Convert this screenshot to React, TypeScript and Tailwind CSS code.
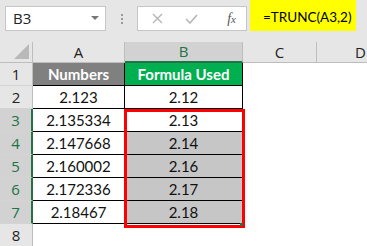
import React from "react";

const rows = [
  { n: "2.123", b: "2.12" },
  { n: "2.135334", b: "2.13" },
  { n: "2.147668", b: "2.14" },
  { n: "2.160002", b: "2.16" },
  { n: "2.172336", b: "2.17" },
  { n: "2.18467", b: "2.18" },
];

const cellFont = { fontFamily: "Lato, 'Open Sans', sans-serif" };
const uiFont = { fontFamily: "'Open Sans', 'Noto Sans', sans-serif" };

function RowHead({ n, sel }: { n: number; sel?: boolean }) {
  return (
    <div
      style={uiFont}
      className={
        "flex items-center justify-center border-b border-[#d4d4d4] text-[15px] " +
        (sel
          ? "bg-[#d2d2d2] text-[#217346] border-r-2 border-r-[#217346]"
          : "bg-[#e6e6e6] text-[#222] border-r border-r-[#bdbdbd]")
      }
    >
      {n}
    </div>
  );
}

export default function App() {
  return (
    <div className="w-[367px] h-[246px] overflow-hidden bg-white">
      {/* formula bar */}
      <div className="h-[42px] bg-[#e6e6e6] flex items-start">
        <div className="mt-[6px] ml-[5px] w-[101px] h-[25px] bg-white border border-[#c6c6c6] flex items-center justify-between pl-[7px] pr-[6px]">
          <span style={uiFont} className="text-[15px] text-[#222]">B3</span>
          <svg width="8" height="5" viewBox="0 0 8 5">
            <path d="M0 0h8L4 4z" fill="#777" />
          </svg>
        </div>
        <div className="mt-[14px] ml-[15px] flex flex-col gap-[2px]">
          <span className="w-[2px] h-[2px] bg-[#9a9a9a]" />
          <span className="w-[2px] h-[2px] bg-[#9a9a9a]" />
          <span className="w-[2px] h-[2px] bg-[#9a9a9a]" />
        </div>
        <div className="mt-[6px] ml-[14px] w-[110px] h-[25px] bg-white border border-[#c6c6c6] flex items-center">
          <svg className="ml-[14px]" width="11" height="11" viewBox="0 0 11 11">
            <path d="M1 1l9 9M10 1l-9 9" stroke="#b4b4b4" strokeWidth="1.3" />
          </svg>
          <svg className="ml-[22px]" width="13" height="10" viewBox="0 0 13 10">
            <path d="M1 5l4 4 7-8" stroke="#b4b4b4" strokeWidth="1.5" fill="none" />
          </svg>
          <span
            className="ml-auto mr-[10px] text-[14px] italic text-[#555]"
            style={{ fontFamily: "'Liberation Serif', serif" }}
          >
            f<span className="text-[11px]">x</span>
          </span>
        </div>
        <div className="ml-[3px] w-[106px] h-[31px] bg-[#ffff00] flex items-center pl-[13px] pt-[4px]">
          <span style={cellFont} className="text-[13.5px] text-black">=TRUNC(A3,2)</span>
        </div>
      </div>

      {/* grid */}
      <div className="relative">
        <div className="grid grid-cols-[33px_92px_118px_74px_1fr] grid-rows-[21px_repeat(8,23px)]">
          {/* header row */}
          <div className="bg-[#e6e6e6] border-r border-b border-[#bdbdbd] flex items-end justify-end pr-[3px] pb-[3px]">
            <svg width="15" height="15" viewBox="0 0 15 15">
              <path d="M15 0v15H0z" fill="#b9b9b9" />
            </svg>
          </div>
          <div style={uiFont} className="bg-[#e6e6e6] border-r border-b border-[#bdbdbd] flex items-center justify-center text-[15px] text-[#222]">
            A
          </div>
          <div style={uiFont} className="bg-[#d2d2d2] border-r border-[#bdbdbd] border-b-2 border-b-[#217346] flex items-center justify-center text-[15px] text-[#217346]">
            B
          </div>
          <div style={uiFont} className="bg-[#e6e6e6] border-r border-b border-[#bdbdbd] flex items-center justify-center text-[15px] text-[#222]">
            C
          </div>
          <div style={uiFont} className="bg-[#e6e6e6] border-b border-[#bdbdbd] flex items-center justify-start pl-[38px] text-[15px] text-[#222]">
            D
          </div>

          {/* row 1 */}
          <RowHead n={1} />
          <div style={cellFont} className="bg-[#808080] border-r border-b border-black flex items-center justify-center text-[15px] font-bold text-white">
            Numbers
          </div>
          <div style={cellFont} className="bg-[#00b050] border-r border-b border-black flex items-center justify-center text-[15px] font-bold text-white">
            Formula Used
          </div>
          <div />
          <div />

          {rows.map((r, i) => {
            const rowNo = i + 2;
            const sel = rowNo >= 3;
            return (
              <React.Fragment key={rowNo}>
                <RowHead n={rowNo} sel={sel} />
                <div style={cellFont} className="bg-white border-r border-b border-black flex items-center justify-center text-[15px] text-[#111]">
                  {r.n}
                </div>
                <div
                  style={cellFont}
                  className={
                    "border-r border-b border-black flex items-center justify-center text-[15px] text-[#111] " +
                    (rowNo >= 4 ? "bg-[#c6c6c6]" : "bg-white")
                  }
                >
                  {r.b}
                </div>
                <div />
                <div />
              </React.Fragment>
            );
          })}

          {/* row 8 */}
          <RowHead n={8} />
          <div />
          <div />
          <div />
          <div />
        </div>

        {/* selection outline */}
        <div className="absolute left-[124px] top-[67px] w-[121px] h-[119px] border-[3px] border-[#ff0000] pointer-events-none">
          <span className="absolute right-[-1px] bottom-[-1px] w-[3px] h-[3px] bg-[#217346]" />
        </div>
      </div>
    </div>
  );
}
